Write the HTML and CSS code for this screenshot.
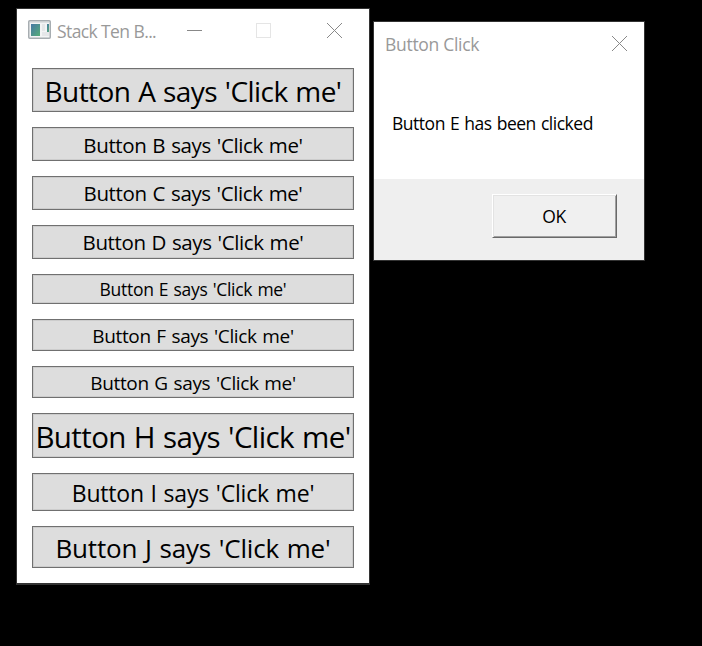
FILE: index.html
```html
<!DOCTYPE html>
<html lang="en">
<head>
<meta charset="utf-8">
<title>Stack Ten Buttons</title>
<link rel="stylesheet" href="styles.css">
</head>
<body>
<main class="desktop">
  <section class="window">
    <header class="titlebar">
      <svg class="app-icon" width="23" height="19" viewBox="0 0 23 19">
        <defs><linearGradient id="g" x1="0" y1="0" x2="1" y2="1"><stop offset="0" stop-color="#4778a5"/><stop offset="1" stop-color="#55ad78"/></linearGradient></defs>
        <rect x=".75" y=".75" width="21.5" height="17.5" rx="1" fill="#f3f4f5" stroke="#a7adb1" stroke-width="1.5"/>
        <path d="M2 2.5h19" stroke="#dde0e2"/>
        <rect x="3" y="4" width="9" height="12" fill="url(#g)"/>
        <path d="M14 4h3v7h-3zM14 12h7v4h-7z" fill="#e5e7e9"/>
        <rect x="19" y="4" width="2" height="8" fill="url(#g)"/>
      </svg>
      <span class="title">Stack Ten B...</span>
      <svg class="controls" width="156" height="16" viewBox="0 0 156 16" fill="none">
        <path d="M0 7.5h15" stroke="#888"/>
        <rect x="69.500" y=".5" width="14" height="14" stroke="#e5e5e5"/>
        <path d="M140 0l15 15M155 0l-15 15" stroke="#888"/>
      </svg>
    </header>
    <div class="stack">
      <button class="btn a"><span>Button A says 'Click me'</span></button>
      <button class="btn b"><span>Button B says 'Click me'</span></button>
      <button class="btn c"><span>Button C says 'Click me'</span></button>
      <button class="btn d"><span>Button D says 'Click me'</span></button>
      <button class="btn e"><span>Button E says 'Click me'</span></button>
      <button class="btn f"><span>Button F says 'Click me'</span></button>
      <button class="btn g"><span>Button G says 'Click me'</span></button>
      <button class="btn h"><span>Button H says 'Click me'</span></button>
      <button class="btn i"><span>Button I says 'Click me'</span></button>
      <button class="btn j"><span>Button J says 'Click me'</span></button>
    </div>
  </section>
  <section class="dialog">
    <header class="dialog-title">
      <span class="caption">Button Click</span>
      <svg width="16" height="16" viewBox="0 0 16 16"><path d="M0 0l15 15M15 0l-15 15" stroke="#888"/></svg>
    </header>
    <p class="message">Button E has been clicked</p>
    <footer class="actions"><button class="ok">OK</button></footer>
  </section>
</main>
</body>
</html>
```
FILE: styles.css
```css
* { box-sizing: border-box; }
body { margin: 0; background: #000; font-family: "Open Sans", "Noto Sans", sans-serif; color: #000; }
button { font-family: inherit; color: inherit; border-radius: 0; margin: 0; padding: 0; }
.desktop { display: flex; align-items: flex-start; gap: 3px; width: 702px; height: 646px; padding: 8px 0 0 16px; overflow: hidden; }
.window { width: 354px; height: 577px; background: #fff; border: 1px solid #333; border-bottom-width: 2px; flex: none; }
.titlebar { display: flex; align-items: center; height: 44px; padding: 0 0 0 11px; color: #999; }
.app-icon { margin-bottom: 3px; flex: none; }
.title { width: 130px; margin: 0 0 1px 6px; font-size: 17.500px; letter-spacing: -0.6px; white-space: nowrap; }
.controls { margin-bottom: 1px; flex: none; }
.stack { display: flex; flex-direction: column; gap: 15px; padding: 15px 14px 0 15px; }
.btn { display: flex; align-items: center; justify-content: center; width: 322px; padding-top: 2px; background: #ddd; border: 1px solid #707070; box-shadow: inset 0 0 0 1px #ccc; white-space: nowrap; word-spacing: 1px; }
.a { height: 44px; font-size: 28px; letter-spacing: -0.55px; }
.b, .c, .d { height: 34px; font-size: 20.500px; letter-spacing: -0.38px; }
.c, .d, .e { padding-top: 0; }
.e { height: 30px; font-size: 17.500px; letter-spacing: -0.3px; }
.f, .g { height: 32px; font-size: 19px; letter-spacing: -0.33px; }
.h { height: 45px; font-size: 29.500px; letter-spacing: -0.6px; }
.i { height: 38px; font-size: 23px; letter-spacing: -0.2px; }
.j { height: 42px; font-size: 26px; letter-spacing: -0.15px; }
.dialog { width: 272px; height: 240px; margin-top: 13px; background: #fff; border: 1px solid #333; flex: none; }
.dialog-title { display: flex; align-items: center; justify-content: space-between; height: 44px; padding: 0 16px 0 11px; color: #999; }
.caption { font-size: 17.500px; letter-spacing: -0.3px; }
.message { height: 113px; margin: 0; padding: 45px 0 0 18px; font-size: 17.500px; line-height: 24px; letter-spacing: -0.48px; word-spacing: 1px; white-space: nowrap; }
.actions { height: 81px; padding: 15px 27px 0 0; background: #efefef; display: flex; justify-content: flex-end; }
.ok { width: 125px; height: 44px; padding-right: 1px; background: #f0f0f0; border: 1px solid; border-color: #fff #696969 #696969 #fff; box-shadow: inset 1px 1px #e3e3e3, inset -1px -1px #a0a0a0; font-size: 17.500px; letter-spacing: -0.5px; }
```
